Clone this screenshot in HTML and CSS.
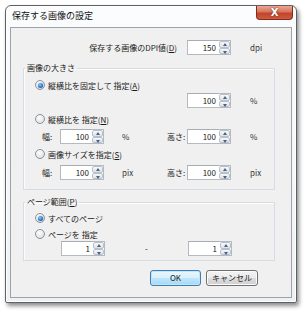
FILE: index.html
```html
<!DOCTYPE html>
<html lang="ja">
<head>
<meta charset="utf-8">
<link rel="stylesheet" href="styles.css">
</head>
<body>
<div class="window">
  <div class="titlebar">
    <span class="title">保存する画像の設定</span>
    <span class="close">X</span>
  </div>
  <div class="client">
    <div class="row dpi-row">
      <span class="dpi-label">保存する画像のDPI値(<u>D</u>)</span>
      <span class="spin"><span class="field">150</span><span class="arrows"><span class="up"></span><span class="down"></span></span></span>
      <span class="unit">dpi</span>
    </div>

    <fieldset class="group g1">
      <legend>画像の大きさ</legend>
      <div class="radio-row r1"><span class="radio on"></span><span>縦横比を固定して 指定(<u>A</u>)</span></div>
      <div class="row single">
        <span class="spin"><span class="field">100</span><span class="arrows"><span class="up"></span><span class="down"></span></span></span>
        <span class="unit">%</span>
      </div>
      <div class="radio-row r2"><span class="radio"></span><span>縦横比を 指定(<u>N</u>)</span></div>
      <div class="row pair">
        <span class="lbl w">幅:</span>
        <span class="spin"><span class="field">100</span><span class="arrows"><span class="up"></span><span class="down"></span></span></span>
        <span class="unit mid">%</span>
        <span class="lbl h">高さ:</span>
        <span class="spin"><span class="field">100</span><span class="arrows"><span class="up"></span><span class="down"></span></span></span>
        <span class="unit">%</span>
      </div>
      <div class="radio-row r3"><span class="radio"></span><span>画像サイズを指定(<u>S</u>)</span></div>
      <div class="row pair p2">
        <span class="lbl w">幅:</span>
        <span class="spin"><span class="field">100</span><span class="arrows"><span class="up"></span><span class="down"></span></span></span>
        <span class="unit mid">pix</span>
        <span class="lbl h">高さ:</span>
        <span class="spin"><span class="field">100</span><span class="arrows"><span class="up"></span><span class="down"></span></span></span>
        <span class="unit">pix</span>
      </div>
    </fieldset>

    <fieldset class="group g2">
      <legend>ページ範囲(<u>P</u>)</legend>
      <div class="radio-row r4"><span class="radio on"></span><span>すべてのページ</span></div>
      <div class="radio-row r5"><span class="radio"></span><span>ページを 指定</span></div>
      <div class="row pages">
        <span class="spin"><span class="field">1</span><span class="arrows"><span class="up"></span><span class="down"></span></span></span>
        <span class="dash">-</span>
        <span class="spin"><span class="field">1</span><span class="arrows"><span class="up"></span><span class="down"></span></span></span>
      </div>
    </fieldset>

    <div class="buttons">
      <span class="btn ok">OK</span>
      <span class="btn cancel">キャンセル</span>
    </div>
  </div>
</div>
</body>
</html>
```
FILE: styles.css
```css
* { box-sizing: border-box; }
html, body { margin: 0; padding: 0; background: #fff; }
body {
  font-family: "Noto Sans CJK JP", "Noto Sans", sans-serif;
  font-size: 8px;
  color: #1a1a1a;
  width: 308px;
  height: 315px;
  overflow: hidden;
}
u { text-decoration: underline; }

.window {
  margin: 5px 0 0 5px;
  width: 292px;
  height: 298px;
  border: 1px solid #5d6269;
  border-radius: 6px 6px 2px 2px;
  background: linear-gradient(#fbfcfd, #eef1f4);
  box-shadow: 2px 3px 4px rgba(0,0,0,0.45), inset 0 0 0 1px #ffffff;
  display: flex;
  flex-direction: column;
  padding: 0 4px 4px 4px;
}
.titlebar {
  height: 21px;
  display: flex;
  justify-content: space-between;
  align-items: flex-start;
}
.title {
  font-size: 9px;
  line-height: 11px;
  margin: 4px 0 0 2px;
  color: #111;
}
.close {
  width: 37px;
  height: 14px;
  margin-right: -1px;
  border: 1px solid #7d2d20;
  border-top: none;
  border-radius: 0 0 4px 4px;
  background: linear-gradient(#e9a894 0%, #d9745c 45%, #c2442a 55%, #cf5a3d 100%);
  color: #fff;
  font-family: "DejaVu Sans", sans-serif;
  font-weight: bold;
  font-size: 10px;
  line-height: 13px;
  text-align: center;
  text-shadow: 0 0 2px #6a1a10;
}
.client {
  flex: 1;
  border: 1px solid #9ea3a9;
  background: #f0f0f0;
  display: flex;
  flex-direction: column;
}

.row { display: flex; align-items: center; height: 15px; }
.dpi-row { margin-top: 12px; }
.dpi-label { width: 166px; text-align: right; margin-right: 10px; }
.unit { margin-left: 19px; color: #333; }

.spin { display: flex; height: 15px; }
.field {
  width: 31px;
  height: 15px;
  background: #fff;
  border: 1px solid #b5b9c0;
  border-top-color: #a8acb3;
  border-right: none;
  text-align: right;
  padding-right: 2px;
  line-height: 13px;
}
.arrows {
  width: 13px;
  display: flex;
  flex-direction: column;
  background: #fff;
  border: 1px solid #b5b9c0;
  border-left: none;
  padding: 0 0 0 1px;
}
.up, .down {
  flex: 1;
  position: relative;
  border: 1px solid #b7c0cb;
  border-radius: 2px;
  background: linear-gradient(#f7f8fa, #dde2e8);
}
.up::after, .down::after {
  content: "";
  position: absolute;
  left: 3px;
  top: 1px;
  border-left: 2.5px solid transparent;
  border-right: 2.5px solid transparent;
}
.up::after { border-bottom: 3px solid #4a6284; }
.down::after { border-top: 3px solid #4a6284; top: 2px; }

.group {
  margin: 0 0 0 12px;
  width: 252px;
  border: 1px solid #d5dce3;
  box-shadow: inset 1px 1px 0 #fcfcfc;
  padding: 0;
  min-width: 0;
}
.group legend {
  padding: 0 2px;
  margin-left: 1px;
  line-height: 10px;
  height: 10px;
}
.g1 { margin-top: 8px; padding-bottom: 9px; }
.g2 { margin-top: 7px; padding-bottom: 4px; }

.radio-row {
  display: flex;
  align-items: center;
  height: 12px;
  padding-left: 11px;
}
.radio {
  width: 10px;
  height: 10px;
  border-radius: 50%;
  border: 1px solid #8d9299;
  background: radial-gradient(circle at 40% 35%, #ffffff 0%, #e6e7e9 60%, #cfd2d6 100%);
  margin-right: 3px;
  position: relative;
  flex: none;
}
.radio.on::after {
  content: "";
  position: absolute;
  left: 1.5px;
  top: 1.5px;
  width: 5px;
  height: 5px;
  border-radius: 50%;
  background: radial-gradient(circle at 40% 35%, #8fd0ff 0%, #2a78c8 55%, #184f8f 100%);
  box-shadow: 0 0 1px #3b8be0;
}
.r1 { margin-top: 6px; }
.single { margin-top: 2px; padding-left: 163px; }
.r2 { margin-top: 5px; }
.pair { margin-top: 4px; padding-left: 18px; }
.r3 { margin-top: 4px; }
.p2 { margin-top: 5px; }
.lbl.w { width: 18px; }
.lbl.h { width: 20px; }
.unit.mid { margin-left: 18px; width: 45px; }
.pair .unit:last-child { margin-left: 19px; }

.r4 { margin-top: 5px; }
.r5 { margin-top: 4px; }
.pages { margin-top: 1px; padding-left: 37px; }
.dash { width: 83px; text-align: center; }

.buttons {
  display: flex;
  justify-content: flex-end;
  gap: 5px;
  margin: 9px 33px 0 0;
}
.btn {
  height: 16px;
  line-height: 14px;
  text-align: center;
  border-radius: 3px;
  font-size: 8px;
}
.ok {
  width: 51px;
  border: 1px solid #3c7fb1;
  background: linear-gradient(#eaf6fd 0%, #d9f0fc 50%, #bee6fd 51%, #a7d9f5 100%);
  box-shadow: inset 0 0 0 1px #c2e6f8;
  font-size: 8px;
}
.cancel {
  width: 52px;
  border: 1px solid #707070;
  background: linear-gradient(#f2f2f2 0%, #ebebeb 50%, #dddddd 51%, #cfcfcf 100%);
  box-shadow: inset 0 0 0 1px #fbfbfb;
}
```
